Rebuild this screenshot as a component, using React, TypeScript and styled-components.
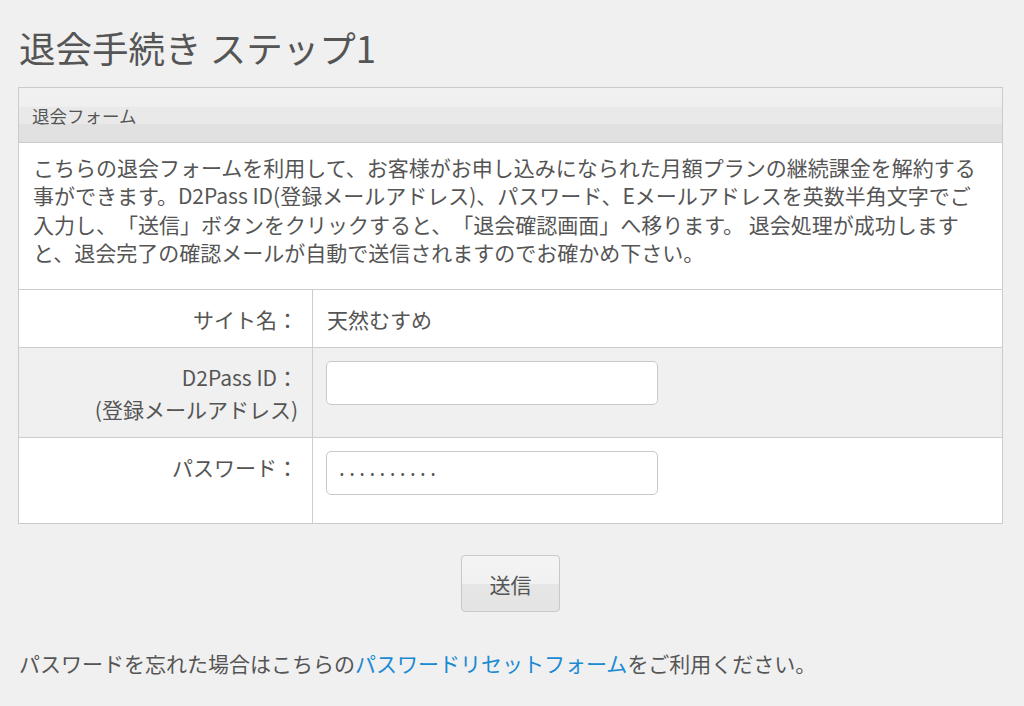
import React from "react";
import styled, { createGlobalStyle } from "styled-components";

const Global = createGlobalStyle`
  html, body { margin: 0; padding: 0; background: #f0f0f0; }
  body {
    font-family: "Noto Sans CJK JP", "Noto Sans", "Liberation Sans", sans-serif;
    color: #555;
    text-spacing-trim: space-all;
  }
`;

const Page = styled.div`
  padding: 26px 21px 20px 18px;
`;

const Title = styled.h1`
  margin: 0 0 18px;
  font-size: 36.5px;
  line-height: 43px;
  font-weight: 400;
  color: #555;
  padding-left: 1px;
`;

const Panel = styled.section`
  border: 1px solid #cbcbcb;
  background: #fff;
`;

const PanelHeader = styled.div`
  height: 55px;
  box-sizing: border-box;
  padding: 0 13px;
  display: flex;
  align-items: center;
  font-size: 17.5px;
  color: #555;
  border-bottom: 1px solid #cdcdcd;
  background: linear-gradient(
    #f1f1f1 0%,
    #f0f0f0 34%,
    #e9e9e9 35%,
    #e9e9e9 66%,
    #e1e1e1 67%,
    #e0e0e0 100%
  );
`;

const Description = styled.p`
  margin: 0;
  padding: 10px 14px 23px;
  font-size: 21px;
  line-height: 28.3px;
  color: #555;
  line-break: strict;
  text-spacing-trim: space-all;
  border-bottom: 1px solid #cdcdcd;
`;

const FormGrid = styled.div`
  display: grid;
  grid-template-columns: 294px 1fr;
`;

const Label = styled.div<{ $shade?: boolean; $last?: boolean }>`
  background: ${(p) => (p.$shade ? "#f0f0f0" : "#fff")};
  border-right: 1px solid #cdcdcd;
  border-bottom: ${(p) => (p.$last ? "none" : "1px solid #cdcdcd")};
  padding: 13px 14px 12px;
  text-align: right;
  font-size: 21px;
  line-height: 32px;
  color: #555;
`;

const Cell = styled.div<{ $shade?: boolean; $input?: boolean; $last?: boolean }>`
  background: ${(p) => (p.$shade ? "#f0f0f0" : "#fff")};
  border-bottom: ${(p) => (p.$last ? "none" : "1px solid #cdcdcd")};
  padding: ${(p) => (p.$input ? "13px 13px 28px" : "13px 14px 12px")};
  font-size: 21px;
  line-height: 32px;
  color: #555;
`;

const TextInput = styled.input`
  display: block;
  box-sizing: border-box;
  width: 332px;
  height: 44px;
  margin: 0;
  padding: 0 13px;
  border: 1px solid #c9c9c9;
  border-radius: 5px;
  background: #fff;
  font-family: inherit;
  font-size: 11px;
  letter-spacing: 6.4px;
  color: #555;
  outline: none;
`;

const Actions = styled.div`
  display: flex;
  justify-content: center;
  padding: 31px 0 0;
`;

const SubmitButton = styled.button`
  width: 99px;
  height: 57px;
  border: 1px solid #c8c8c8;
  border-radius: 4px;
  background: linear-gradient(#f4f4f4 0%, #f1f1f1 50%, #e6e6e6 51%, #e4e4e4 100%);
  font-family: inherit;
  font-size: 21px;
  color: #555;
  padding: 0;
  cursor: pointer;
`;

const Footer = styled.p`
  margin: 37px 0 0;
  padding-left: 1px;
  font-size: 21px;
  line-height: 28px;
  color: #555;
`;

const Link = styled.a`
  color: #1a8ad3;
  text-decoration: none;
`;

export default function App() {
  return (
    <>
      <Global />
      <Page>
        <Title>退会手続き ステップ1</Title>
        <Panel>
          <PanelHeader>退会フォーム</PanelHeader>
          <Description>
            こちらの退会フォームを利用して、お客様がお申し込みになられた月額プランの継続課金を解約する事ができます。D2Pass
            ID(登録メールアドレス)、パスワード、Eメールアドレスを英数半角文字でご入力し、「送信」ボタンをクリックすると、「退会確認画面」へ移ります。
            退会処理が成功しますと、退会完了の確認メールが自動で送信されますのでお確かめ下さい。
          </Description>
          <FormGrid>
            <Label>サイト名：</Label>
            <Cell>天然むすめ</Cell>
            <Label $shade>
              D2Pass ID：
              <br />
              (登録メールアドレス)
            </Label>
            <Cell $shade $input>
              <TextInput type="text" readOnly defaultValue="" />
            </Cell>
            <Label $last>パスワード：</Label>
            <Cell $input $last>
              <TextInput type="password" readOnly defaultValue="1234567890" />
            </Cell>
          </FormGrid>
        </Panel>
        <Actions>
          <SubmitButton type="button">送信</SubmitButton>
        </Actions>
        <Footer>
          パスワードを忘れた場合はこちらの
          <Link href="#">パスワードリセットフォーム</Link>
          をご利用ください。
        </Footer>
      </Page>
    </>
  );
}
